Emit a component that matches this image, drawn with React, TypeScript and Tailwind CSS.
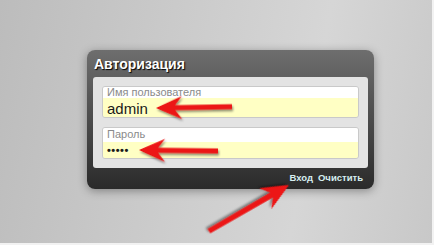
import React from 'react';

interface FieldProps {
  label: string;
  value: string;
  valueClass: string;
}

const Field: React.FC<FieldProps> = ({ label, value, valueClass }) => {
  return (
    <div className="flex h-[32px] flex-col overflow-hidden rounded-[3px] border border-[#c9c9c9]">
      <div className="flex h-[14px] items-center bg-white pl-[4px] text-[11px] leading-none text-[#8a8a8a]">
        {label}
      </div>
      <div className={`flex flex-1 items-center bg-[#ffffc4] pl-[4px] text-[#1a1a1a] ${valueClass}`}>
        {value}
      </div>
    </div>
  );
};

// red arrow, local shape points to -x with its tip at 0,0
const Arrow: React.FC<{ x: number; y: number; angle: number; len: number; scale?: number }> = ({
  x,
  y,
  angle,
  len,
  scale = 1,
}) => (
  <g transform={`translate(${x} ${y}) rotate(${angle}) scale(${scale})`} filter="url(#shade)">
    <path
      d={`M0 0 L26 -11.5 L19 -2.6 L${len} -2.4 L${len} 2.4 L19 2.6 L26 11.5 Z`}
      fill="#ec1212"
    />
  </g>
);

export default function App() {
  return (
    <div
      className="relative h-[245px] w-[434px] overflow-hidden border-b-2 border-r-2 border-[#f2f2f2] bg-[linear-gradient(100deg,#bcbcbc_0%,#cdcdcd_45%,#d6d6d6_70%,#c8c8c8_100%)] pl-[87px] pt-[50px]"
      style={{ fontFamily: '"Liberation Sans", Arial, sans-serif' }}
    >
      <div className="flex h-[139px] w-[287px] flex-col rounded-[8px] bg-[linear-gradient(180deg,#6e6e6e_0%,#555_35%,#3c3c3c_75%,#2a2a2a_100%)] shadow-[0_2px_10px_rgba(0,0,0,0.35)]">
        <div className="flex h-[27px] items-center pl-[7px] pt-[2px] text-[14px] font-bold text-white [text-shadow:1px_1px_1px_#000]">
          Авторизация
        </div>
        <div className="mx-[6px] flex h-[91px] flex-col gap-[9px] rounded-[3px] bg-[#e3e3e3] px-[9px] py-[9px]">
          <Field label="Имя пользователя" value="admin" valueClass="text-[15px]" />
          <Field label="Пароль" value="•••••" valueClass="text-[11px] font-bold tracking-[0.5px]" />
        </div>
        <div className="flex flex-1 items-center justify-end gap-[5px] pr-[11px] pb-[1px] text-[9.5px] font-bold text-[#d6eef0]">
          <span>Вход</span>
          <span>Очистить</span>
        </div>
      </div>

      <svg className="pointer-events-none absolute left-0 top-0" width="434" height="245">
        <defs>
          <filter id="shade" x="-20%" y="-50%" width="140%" height="200%">
            <feDropShadow dx="1" dy="2" stdDeviation="1.2" floodColor="#000" floodOpacity="0.45" />
          </filter>
        </defs>
        <Arrow x={156} y={108} angle={-1} len={76} />
        <Arrow x={139} y={150} angle={0.7} len={79} />
        <Arrow x={289} y={185} angle={150} len={88} scale={1.05} />
      </svg>
    </div>
  );
}
